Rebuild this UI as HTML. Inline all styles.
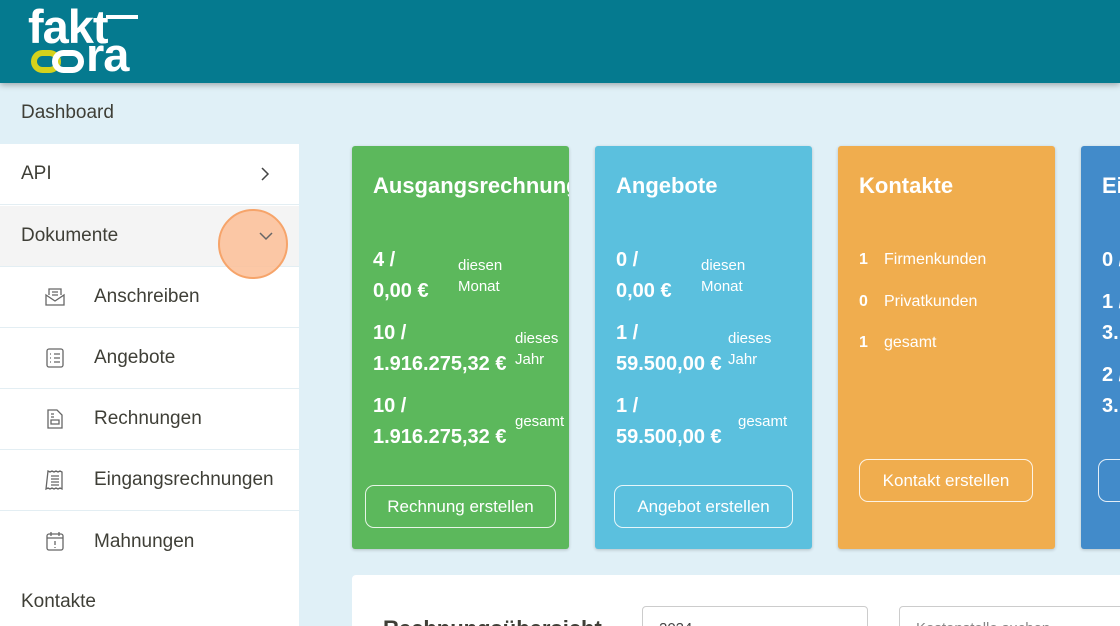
<!DOCTYPE html>
<html><head><meta charset="utf-8"><style>
*{margin:0;padding:0;box-sizing:border-box}
html{width:1120px;height:626px;overflow:hidden}
body{width:1120px;height:626px;overflow:hidden;background:#e0f0f7;font-family:"Liberation Sans",Arial,sans-serif;position:relative}
.hdr{position:absolute;left:0;top:0;width:1120px;height:83px;background:#057a8f;box-shadow:0 2px 6px rgba(0,0,0,.3)}
.logo{position:absolute;color:#fff;font-weight:bold;font-size:47px;line-height:1;letter-spacing:-1px}
.side{position:absolute;left:0;top:144px;width:299px;height:482px;background:#fff}
.row{position:absolute;left:0;width:299px;height:61px;border-bottom:1px solid #e3eef3;color:#3f3f37;font-size:19px;display:flex;align-items:center}
.row .t{position:absolute;left:21px}
.sub .t{left:94px}
.sub svg{position:absolute;left:44px;top:19px}
.card{position:absolute;top:146px;width:217px;height:403px;border-radius:3px;color:#fff;box-shadow:0 1px 3px rgba(0,0,0,.2);overflow:hidden}
.big{position:absolute;font-weight:bold;font-size:20px;white-space:nowrap}
.sm{position:absolute;font-size:15px;white-space:nowrap}
.btn{position:absolute;border:1.5px solid rgba(255,255,255,.85);border-radius:9px;font-size:17px;display:flex;align-items:center;justify-content:center}
</style></head><body>
<div class="hdr">
<div class="logo" style="left:28px;top:3px">fakt</div>
<div style="position:absolute;left:106px;top:15px;width:32px;height:4px;background:#fff"></div>
<div class="logo" style="left:86px;top:31px">ra</div>
<div style="position:absolute;left:31px;top:50px;width:30px;height:23px;border:6px solid #d4d21c;border-radius:12px"></div>
<div style="position:absolute;left:52px;top:50px;width:32px;height:23px;border:6px solid #fff;border-radius:12px"></div>
</div>
<div style="position:absolute;left:21px;top:102px;font-size:19px;color:#3f3f37">Dashboard</div>
<div class="side">
<div class="row" style="top:0"><span class="t">API</span><svg style="position:absolute;left:259px;top:22px" width="12" height="16"><path d="M3 2l6 6-6 6" fill="none" stroke="#444" stroke-width="1.5"/></svg></div>
<div class="row" style="top:62px;background:#f4f4f4"><span class="t">Dokumente</span></div>
<div class="row sub" style="top:123px"><svg width="22" height="22" fill="none" stroke="#666" stroke-width="1.3"><path d="M5 9V3h12v6M8 6h6M8 9h6M2 9l9 6 9-6v10H2z"/></svg><span class="t">Anschreiben</span></div>
<div class="row sub" style="top:184px"><svg width="22" height="22" fill="none" stroke="#666" stroke-width="1.3"><rect x="3" y="2" width="16" height="18" rx="2"/><path d="M6 7h1M10 7h6M6 11h1M10 11h6M6 15h1M10 15h6"/></svg><span class="t">Angebote</span></div>
<div class="row sub" style="top:245px"><svg width="22" height="22" fill="none" stroke="#666" stroke-width="1.3"><path d="M4 2h9l5 5v13H4zM7 6h3M7 9h3M7 12h8v4H7z"/></svg><span class="t">Rechnungen</span></div>
<div class="row sub" style="top:306px"><svg width="22" height="22" fill="none" stroke="#666" stroke-width="1.3"><path d="M4 2l2 1 2-1 2 1 2-1 2 1 2-1 2 1v17l-2-1-2 1-2-1-2 1-2-1-2 1-2-1-2 1zM7 7h8M7 10h8M7 13h8M7 16h8"/></svg><span class="t">Eingangsrechnungen</span></div>
<div class="row sub" style="top:367px;border:none"><svg width="22" height="22" fill="none" stroke="#666" stroke-width="1.3"><rect x="3" y="4" width="16" height="16" rx="2"/><path d="M3 8h16M7 2v4M15 2v4M11 11v4M11 17v1"/></svg><span class="t">Mahnungen</span></div>
<div style="position:absolute;left:21px;top:447px;font-size:19px;color:#3f3f37">Kontakte</div>
</div>
<div style="position:absolute;left:218px;top:209px;width:70px;height:70px;border-radius:50%;background:rgba(252,190,150,.85);border:2px solid #f6a46a"></div>
<svg style="position:absolute;left:258px;top:230px" width="16" height="12"><path d="M2 3l6 6 6-6" fill="none" stroke="#666" stroke-width="1.5"/></svg>

<div class="card" style="left:352px;background:#5cb85c"><div style="position:absolute;left:21px;top:27px;font-size:22px;font-weight:bold;white-space:nowrap">Ausgangsrechnungen</div>
<div class="big" style="left:21px;top:103px">4 /</div><div class="big" style="left:21px;top:134px">0,00 €</div><div class="sm" style="left:106px;top:111px">diesen</div><div class="sm" style="left:106px;top:132px">Monat</div>
<div class="big" style="left:21px;top:176px">10 /</div><div class="big" style="left:21px;top:207px">1.916.275,32 €</div><div class="sm" style="left:163px;top:184px">dieses</div><div class="sm" style="left:163px;top:205px">Jahr</div>
<div class="big" style="left:21px;top:249px">10 /</div><div class="big" style="left:21px;top:280px">1.916.275,32 €</div><div class="sm" style="left:163px;top:267px">gesamt</div>
<div class="btn" style="left:13px;top:339px;width:191px;height:43px">Rechnung erstellen</div></div>

<div class="card" style="left:595px;background:#5bc0de"><div style="position:absolute;left:21px;top:27px;font-size:22px;font-weight:bold">Angebote</div>
<div class="big" style="left:21px;top:103px">0 /</div><div class="big" style="left:21px;top:134px">0,00 €</div><div class="sm" style="left:106px;top:111px">diesen</div><div class="sm" style="left:106px;top:132px">Monat</div>
<div class="big" style="left:21px;top:176px">1 /</div><div class="big" style="left:21px;top:207px">59.500,00 €</div><div class="sm" style="left:133px;top:184px">dieses</div><div class="sm" style="left:133px;top:205px">Jahr</div>
<div class="big" style="left:21px;top:249px">1 /</div><div class="big" style="left:21px;top:280px">59.500,00 €</div><div class="sm" style="left:143px;top:267px">gesamt</div>
<div class="btn" style="left:19px;top:339px;width:179px;height:43px">Angebot erstellen</div></div>

<div class="card" style="left:838px;background:#f0ad4e"><div style="position:absolute;left:21px;top:27px;font-size:22px;font-weight:bold">Kontakte</div>
<div class="sm" style="left:21px;top:105px;font-weight:bold;font-size:16px">1</div><div class="sm" style="left:46px;top:105px;font-size:16px">Firmenkunden</div>
<div class="sm" style="left:21px;top:147px;font-weight:bold;font-size:16px">0</div><div class="sm" style="left:46px;top:147px;font-size:16px">Privatkunden</div>
<div class="sm" style="left:21px;top:188px;font-weight:bold;font-size:16px">1</div><div class="sm" style="left:46px;top:188px;font-size:16px">gesamt</div>
<div class="btn" style="left:21px;top:313px;width:174px;height:43px">Kontakt erstellen</div></div>

<div class="card" style="left:1081px;width:60px;background:#428bca"><div style="position:absolute;left:21px;top:27px;font-size:22px;font-weight:bold">Ei</div>
<div class="big" style="left:21px;top:103px">0 /</div><div class="big" style="left:21px;top:145px">1 /</div><div class="big" style="left:21px;top:176px">3.</div><div class="big" style="left:21px;top:218px">2 /</div><div class="big" style="left:21px;top:249px">3.</div>
<div class="btn" style="left:17px;top:313px;width:60px;height:43px"></div></div>

<div style="position:absolute;left:352px;top:575px;width:780px;height:60px;background:#fff;border-radius:4px"></div>
<div style="position:absolute;left:383px;top:616px;font-size:22px;font-weight:bold;color:#3f3f37">Rechnungsübersicht</div>
<div style="position:absolute;left:642px;top:606px;width:226px;height:30px;border:1px solid #ccc;border-radius:4px;font-size:15px;color:#444;padding:13px 0 0 16px">2024</div>
<div style="position:absolute;left:899px;top:606px;width:240px;height:30px;border:1px solid #ccc;border-radius:4px;font-size:15px;color:#888;padding:13px 0 0 16px">Kostenstelle suchen</div>
</body></html>
